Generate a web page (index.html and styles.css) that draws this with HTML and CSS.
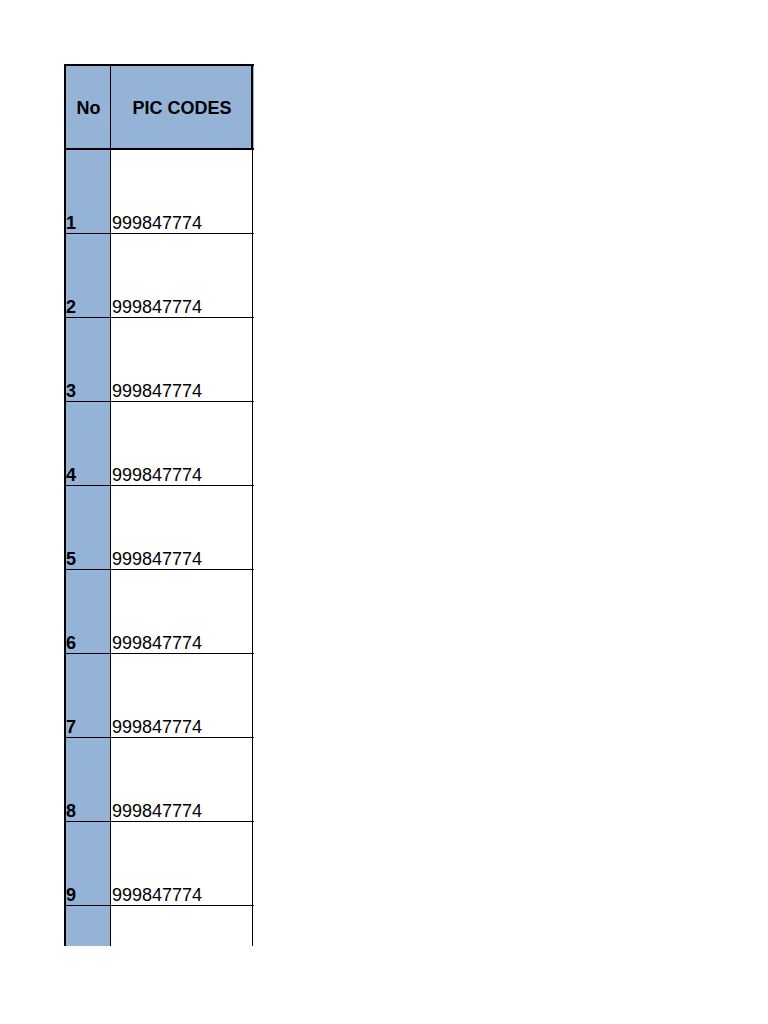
FILE: index.html
```html
<!DOCTYPE html>
<html>
<head>
<meta charset="utf-8">
<link rel="stylesheet" href="styles.css">
</head>
<body>
<div class="sheet">
  <div class="row head">
    <div class="cell no">No</div>
    <div class="cell code">PIC CODES</div>
  </div>
  <div class="row"><div class="cell no">1</div><div class="cell code">999847774</div></div>
  <div class="row"><div class="cell no">2</div><div class="cell code">999847774</div></div>
  <div class="row"><div class="cell no">3</div><div class="cell code">999847774</div></div>
  <div class="row"><div class="cell no">4</div><div class="cell code">999847774</div></div>
  <div class="row"><div class="cell no">5</div><div class="cell code">999847774</div></div>
  <div class="row"><div class="cell no">6</div><div class="cell code">999847774</div></div>
  <div class="row"><div class="cell no">7</div><div class="cell code">999847774</div></div>
  <div class="row"><div class="cell no">8</div><div class="cell code">999847774</div></div>
  <div class="row"><div class="cell no">9</div><div class="cell code">999847774</div></div>
  <div class="row"><div class="cell no"></div><div class="cell code"></div></div>
</div>
</body>
</html>
```
FILE: styles.css
```css
html, body {
  margin: 0;
  padding: 0;
  background: #ffffff;
}
body {
  font-family: "Liberation Sans", Arial, sans-serif;
  color: #000;
}
.sheet {
  margin: 64px 0 0 64px;
  width: 190px;
  height: 882px;
  overflow: hidden;
}
.row {
  display: grid;
  grid-template-columns: 47px 142px;
  height: 84px;
  box-sizing: border-box;
  border-bottom: 1px solid #000;
}
.row.head {
  height: 86px;
  border-top: 2px solid #000;
  border-bottom: 2px solid #000;
  background: #95b3d7;
}
.cell {
  box-sizing: border-box;
  display: flex;
  align-items: flex-end;
  font-size: 18px;
  line-height: 20px;
  padding-bottom: 0;
}
.cell.no {
  background: #95b3d7;
  border-left: 2px solid #000;
  border-right: 1px solid #000;
  font-weight: bold;
}
.cell.code {
  border-right: 1px solid #000;
  padding-left: 1px;
}
.head .cell {
  align-items: center;
  justify-content: center;
  font-weight: bold;
  padding: 2px 0 0 0;
}
.head .cell.no {
  padding-left: 1px;
}
.head .cell.code {
  border-right: 2px solid #000;
  padding-left: 2px;
}
```
